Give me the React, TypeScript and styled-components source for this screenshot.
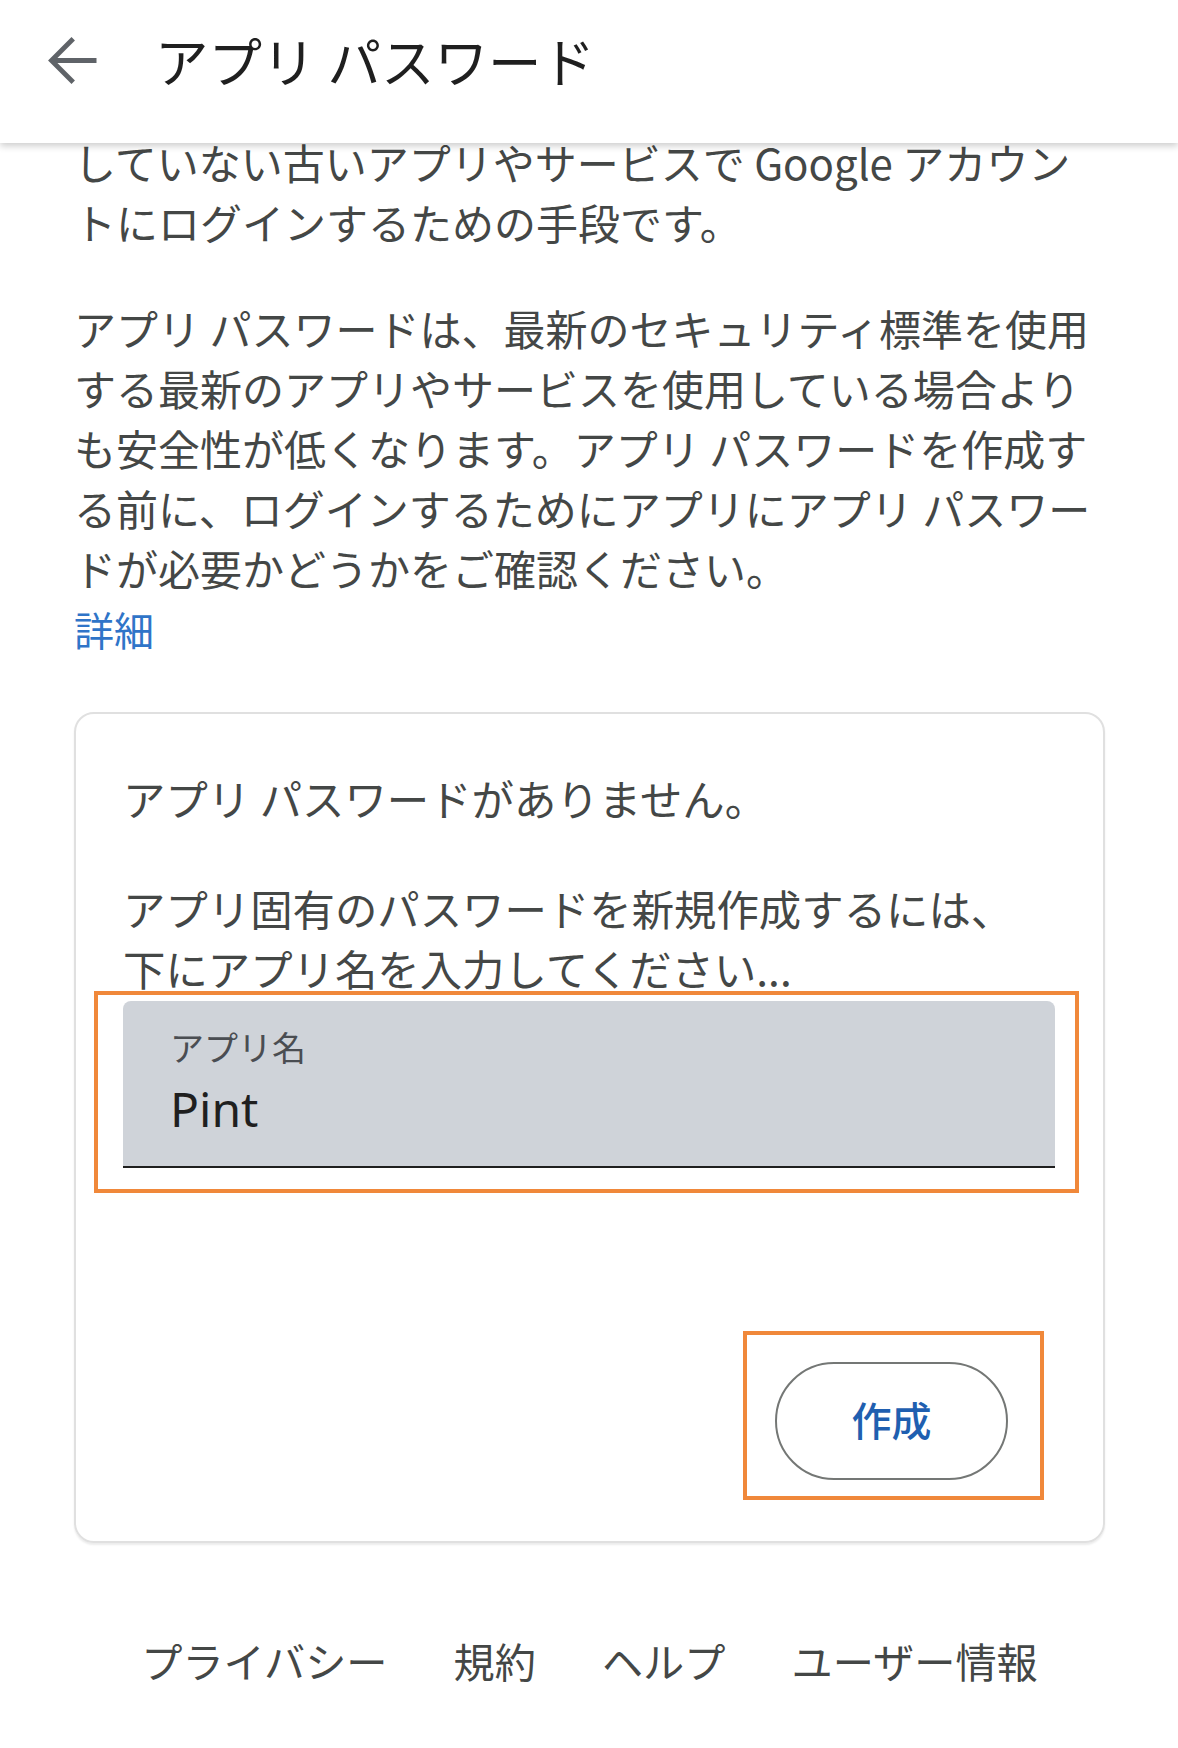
import React, { FC } from 'react';
import styled, { createGlobalStyle } from 'styled-components';

const COLOR_TITLE = '#1f1f1f';
const COLOR_TEXT = '#444746';
const COLOR_ICON = '#5f6368';
const COLOR_LINK = '#2f74c8';
const COLOR_BUTTON_TEXT = '#1f5fb0';
const COLOR_BORDER = '#e0e0e0';
const COLOR_FIELD = '#cfd3d9';
const COLOR_MARK = '#f0883a';
const FONT = '"Noto Sans CJK JP", "Noto Sans", sans-serif';

const GlobalStyle = createGlobalStyle`
    html, body {
        margin: 0;
        padding: 0;
        background: #ffffff;
    }

    body {
        font-family: ${ FONT };
        color: ${ COLOR_TEXT };
    }
`;

const Page = styled.div`
    width: 1178px;
    min-height: 1748px;
    overflow: hidden;
    background: #ffffff;
`;

const Header = styled.header`
    align-items: center;
    background: #ffffff;
    box-shadow: 0 3px 7px rgba(0, 0, 0, 0.2);
    box-sizing: border-box;
    display: flex;
    gap: 46px;
    height: 143px;
    padding: 0 0 23px 34px;
    position: relative;
    z-index: 1;
`;

const BackIcon = styled.svg`
    display: block;
    flex: none;
    fill: ${ COLOR_ICON };
`;

const Title = styled.h1`
    color: ${ COLOR_TITLE };
    font-size: 53.5px;
    font-weight: 400;
    line-height: 60px;
    margin: 0;
    white-space: nowrap;
`;

const Content = styled.main`
    margin-top: -11px;
    padding: 0 73px 0 74px;
`;

const Paragraph = styled.p<{ $gap?: number }>`
    font-size: 42px;
    line-height: 60px;
    margin: ${ p => p.$gap ?? 0 }px 0 0;
    white-space: nowrap;
`;

const MoreLink = styled.a`
    color: ${ COLOR_LINK };
    display: block;
    font-size: 40px;
    line-height: 60px;
    margin-top: 1px;
    text-decoration: none;
`;

const Card = styled.section`
    border: 2px solid ${ COLOR_BORDER };
    border-radius: 20px;
    box-shadow: 0 2px 2px rgba(0, 0, 0, 0.08);
    margin-top: 53px;
    padding: 54px 48px 61px 47px;
`;

const CardText = styled.p<{ $gap?: number }>`
    font-size: 42.4px;
    line-height: 60px;
    margin: ${ p => p.$gap ?? 0 }px 0 0;
    white-space: nowrap;
`;

const Marked = styled.div`
    position: relative;
`;

const Mark = styled.span<{ $top: number; $right: number; $bottom: number; $left: number }>`
    border: 4px solid ${ COLOR_MARK };
    bottom: ${ p => -p.$bottom }px;
    left: ${ p => -p.$left }px;
    pointer-events: none;
    position: absolute;
    right: ${ p => -p.$right }px;
    top: ${ p => -p.$top }px;
`;

const Field = styled.div`
    background: ${ COLOR_FIELD };
    border-bottom: 2.5px solid #1f1f1f;
    border-radius: 8px 8px 0 0;
    box-sizing: border-box;
    height: 167px;
    margin-top: 3px;
    padding: 26px 0 0 47px;
`;

const FieldLabel = styled.label`
    color: #4a4d52;
    display: block;
    font-size: 34px;
    line-height: 40px;
`;

const FieldValue = styled.div`
    color: #1f1f1f;
    font-family: "Noto Sans", ${ FONT };
    font-size: 48px;
    line-height: 60px;
    margin-top: 12px;
`;

const Actions = styled.div`
    display: flex;
    justify-content: flex-end;
    margin-top: 194px;
    padding-right: 47px;
`;

const CreateButton = styled.button`
    align-items: center;
    background: #ffffff;
    border: 2.5px solid #747775;
    border-radius: 59px;
    box-sizing: border-box;
    color: ${ COLOR_BUTTON_TEXT };
    display: flex;
    font-family: ${ FONT };
    font-size: 40px;
    font-weight: 500;
    height: 118px;
    justify-content: center;
    padding: 0 0 4px;
    width: 233px;
`;

const Footer = styled.footer`
    display: flex;
    gap: 66px;
    justify-content: center;
    margin-top: 87px;
`;

const FooterLink = styled.a`
    color: ${ COLOR_TEXT };
    font-size: 41.2px;
    line-height: 60px;
    text-decoration: none;
    white-space: nowrap;
`;

const lines = (items: string[]) =>
    items.map((line, i) => (
        <React.Fragment key={ i }>
            { i > 0 && <br /> }
            { line }
        </React.Fragment>
    ));

const FOOTER_LINKS = ['プライバシー', '規約', 'ヘルプ', 'ユーザー情報'];

const App: FC = () => (
    <Page>
        <GlobalStyle />
        <Header>
            <BackIcon width="75" height="75" viewBox="0 0 24 24">
                <path d="M20 11.2H7.5l5.6-5.6L12 4.5 4.5 12l7.5 7.5 1.1-1.1-5.6-5.6H20z" />
            </BackIcon>
            <Title>アプリ パスワード</Title>
        </Header>
        <Content>
            <Paragraph>
                { lines([
                    'していない古いアプリやサービスで Google アカウン',
                    'トにログインするための手段です。'
                ]) }
            </Paragraph>
            <Paragraph $gap={ 46 }>
                { lines([
                    'アプリ パスワードは、最新のセキュリティ標準を使用',
                    'する最新のアプリやサービスを使用している場合より',
                    'も安全性が低くなります。アプリ パスワードを作成す',
                    'る前に、ログインするためにアプリにアプリ パスワー',
                    'ドが必要かどうかをご確認ください。'
                ]) }
            </Paragraph>
            <MoreLink href="#">詳細</MoreLink>
            <Card>
                <CardText>アプリ パスワードがありません。</CardText>
                <CardText $gap={ 50 }>
                    { lines([
                        'アプリ固有のパスワードを新規作成するには、',
                        '下にアプリ名を入力してください...'
                    ]) }
                </CardText>
                <Marked>
                    <Field>
                        <FieldLabel>アプリ名</FieldLabel>
                        <FieldValue>Pint</FieldValue>
                    </Field>
                    <Mark $top={ 10 } $right={ 24 } $bottom={ 25 } $left={ 29 } />
                </Marked>
                <Actions>
                    <Marked>
                        <CreateButton>作成</CreateButton>
                        <Mark $top={ 31 } $right={ 36 } $bottom={ 20 } $left={ 32 } />
                    </Marked>
                </Actions>
            </Card>
            <Footer>
                { FOOTER_LINKS.map(label => (
                    <FooterLink key={ label } href="#">{ label }</FooterLink>
                )) }
            </Footer>
        </Content>
    </Page>
);

export default App;
